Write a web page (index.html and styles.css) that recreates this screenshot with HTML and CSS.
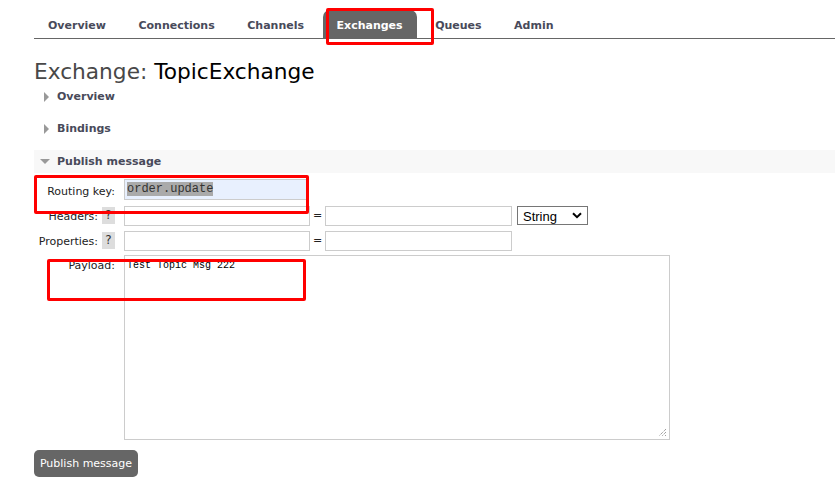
FILE: index.html
```html
<!DOCTYPE html>
<html>
<head>
<meta charset="utf-8">
<link rel="stylesheet" href="styles.css">
</head>
<body>
<div class="page">
  <nav class="tabs">
    <span class="tab">Overview</span>
    <span class="tab">Connections</span>
    <span class="tab">Channels</span>
    <span class="tab active">Exchanges</span>
    <span class="tab">Queues</span>
    <span class="tab">Admin</span>
  </nav>
  <h1 class="title">Exchange: <b>TopicExchange</b></h1>
  <div class="section"><span class="tri right"></span>Overview</div>
  <div class="section"><span class="tri right"></span>Bindings</div>
  <div class="section open"><span class="tri down"></span>Publish message</div>
  <div class="form">
    <div class="row r-key">
      <label class="lbl">Routing key:</label>
      <div class="inp key"><span class="sel">order.update</span></div>
    </div>
    <div class="row r-hdr">
      <label class="lbl">Headers: <span class="help">?</span></label>
      <div class="inp w1"></div>
      <span class="eq">=</span>
      <div class="inp w2"></div>
      <div class="select">String<svg width="10" height="7" viewBox="0 0 10 7"><path d="M1 1.2 L5 5.2 L9 1.2" fill="none" stroke="#000" stroke-width="2"/></svg></div>
    </div>
    <div class="row r-prop">
      <label class="lbl">Properties: <span class="help">?</span></label>
      <div class="inp w1"></div>
      <span class="eq">=</span>
      <div class="inp w2"></div>
    </div>
    <div class="row r-pay">
      <label class="lbl">Payload:</label>
      <div class="area">Test Topic Msg 222<svg class="grip" width="9" height="9" viewBox="0 0 9 9"><path d="M8 1 L1 8 M8 4 L4 8 M8 7 L7 8" stroke="#777" stroke-width="1" stroke-dasharray="1 1"/></svg></div>
    </div>
  </div>
  <button class="btn">Publish message</button>
  <div class="mark m1"></div>
  <div class="mark m2"></div>
  <div class="mark m3"></div>
</div>
</body>
</html>
```
FILE: styles.css
```css
* { box-sizing: border-box; }
html, body { margin: 0; padding: 0; background: #fff; }
body { font-family: "DejaVu Sans", Verdana, sans-serif; color: #484848; }
.page { position: relative; width: 835px; height: 485px; overflow: hidden; padding-left: 34px; }
.tabs { display: flex; height: 39px; border-bottom: 1px solid #666; padding-top: 10px; }
.tab { font-size: 11px; font-weight: bold; color: #484a5a; padding: 9px 14px 0; height: 28px; margin-right: 4.5px; }
.tab.active { background: #666; color: #fff; border-radius: 7px 7px 0 0; }
.title { font-size: 21.7px; font-weight: normal; margin: 20px 0 0; color: #484848; line-height: 26px; height: 26px; }
.title b { font-weight: normal; color: #000; }
.section { font-size: 11px; font-weight: bold; color: #484a5a; height: 32px; padding: 5px 0 0 23px; position: relative; }
.section.open { background: #f8f8f8; height: 23px; padding-top: 5px; margin-top: 1px; }
.tri { position: absolute; width: 0; height: 0; }
.tri.right { left: 10px; top: 7px; border-left: 5px solid #999; border-top: 5px solid transparent; border-bottom: 5px solid transparent; }
.tri.down { left: 6px; top: 9px; border-top: 5px solid #999; border-left: 5px solid transparent; border-right: 5px solid transparent; }
.form { padding-top: 5px; }
.row { display: flex; align-items: flex-start; }
.lbl { width: 81px; text-align: right; font-size: 11px; color: #222; padding-top: 4px; flex: none; display: flex; justify-content: flex-end; align-items: flex-start; gap: 4px; white-space: nowrap; }
.r-key .lbl { padding-top: 7px; }
.help { background: #ddd; color: #333; width: 13px; height: 17px; display: inline-block; text-align: center; font-size: 12px; line-height: 17px; margin-top: -3px; }
.inp { border: 1px solid #ccc; height: 20px; margin-left: 9px; background: #fff; }
.key { width: 184px; height: 21px; background: #e8f0fe; margin-left: 9px; margin-top: 1px; padding: 2px 2px; font-family: "Liberation Mono", "Courier New", monospace; font-size: 12px; line-height: 14px; }
.sel { background: #aaa; color: #333; }
.r-hdr { margin-top: 6px; }
.r-prop { margin-top: 5px; }
.r-pay { margin-top: 4px; }
.w1 { width: 186px; }
.w2 { width: 187px; margin-left: 0; }
.eq { width: 15px; text-align: center; font-size: 11px; padding-top: 3px; color: #222; }
.select { margin-left: 5px; width: 71px; height: 19px; border: 1px solid #767676; font-family: "Liberation Sans", Arial, sans-serif; font-size: 13px; color: #000; padding: 1px 5px 0 5px; display: flex; justify-content: space-between; align-items: center; }
.select svg { margin-top: -1px; }
.area { position: relative; margin-left: 9px; width: 546px; height: 185px; border: 1px solid #ccc; font-family: "Liberation Mono", "Courier New", monospace; font-size: 10px; color: #000; padding: 4px 2px; }
.grip { position: absolute; right: 2px; bottom: 2px; }
.btn { display: block; margin-top: 10px; background: #666; color: #fff; border: none; border-radius: 5px; font-family: "DejaVu Sans", Verdana, sans-serif; font-size: 11px; height: 27px; width: 104px; padding: 0; }
.mark { position: absolute; border: 3px solid #f00; border-radius: 2px; }
.m1 { left: 326px; top: 8px; width: 108px; height: 37px; }
.m2 { left: 34px; top: 175px; width: 275px; height: 39px; }
.m3 { left: 47px; top: 259px; width: 259px; height: 42px; }
```
